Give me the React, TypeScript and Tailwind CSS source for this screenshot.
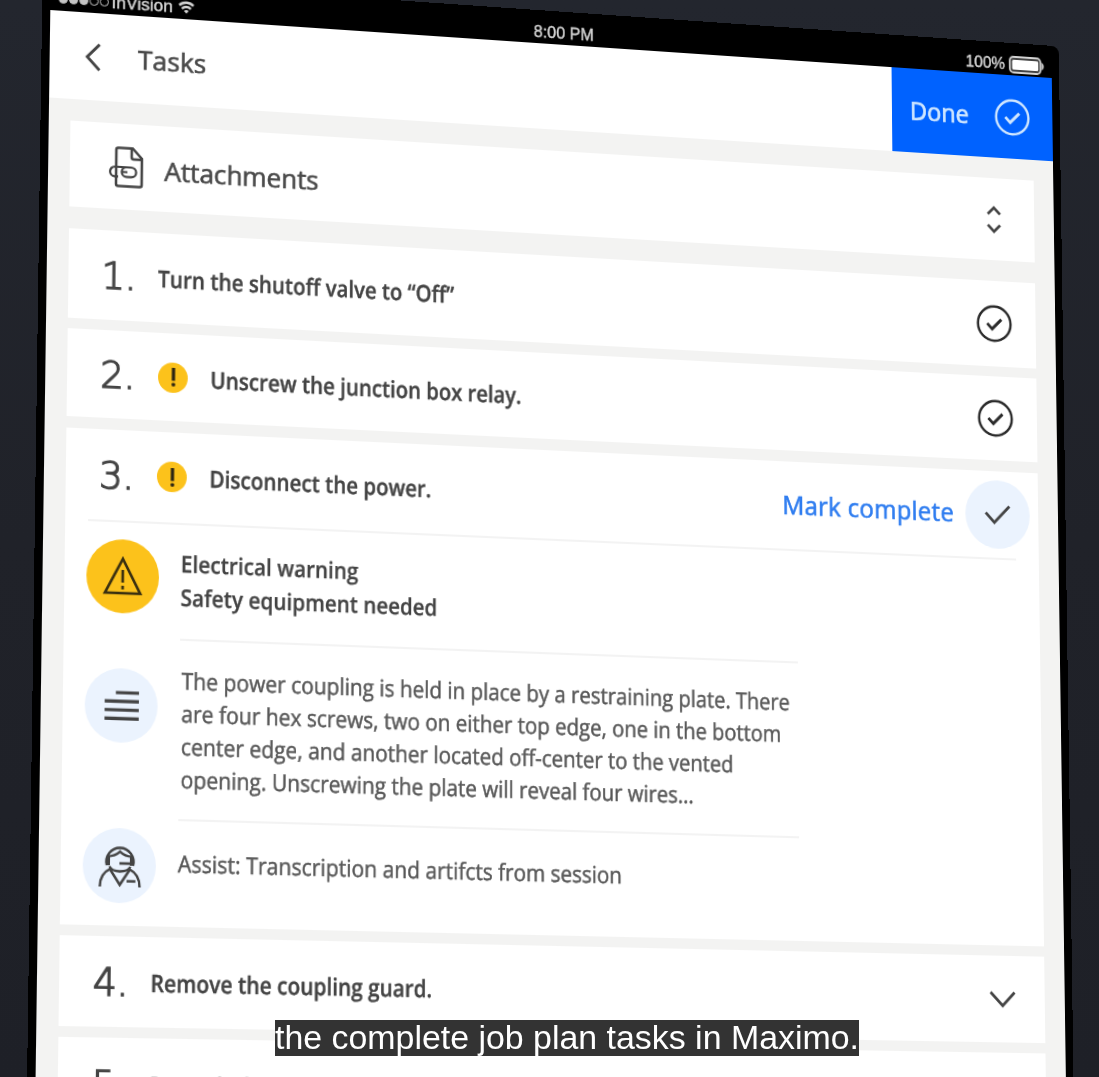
import type { ReactNode } from "react";

type Point = [number, number];

const BEZEL_X = 8;
const BEZEL_TOP = 33;
const SCREEN_W = 1024;
const SCREEN_H = 962;

// Where the corners of the 1024x962 screen area land in the window.
const QUAD: [Point, Point, Point, Point] = [
  [50.3, 10],
  [1051.7, 78],
  [1065.3, 1043.4],
  [36.3, 1025.6],
];

// CSS matrix that maps the screen rectangle onto QUAD (a square-to-quad homography).
function perspectiveMatrix() {
  const [[x0, y0], [x1, y1], [x2, y2], [x3, y3]] = QUAD;
  const dx1 = x1 - x2;
  const dx2 = x3 - x2;
  const sx = x0 - x1 + x2 - x3;
  const dy1 = y1 - y2;
  const dy2 = y3 - y2;
  const sy = y0 - y1 + y2 - y3;
  const det = dx1 * dy2 - dx2 * dy1;
  const g = (sx * dy2 - dx2 * sy) / det / SCREEN_W;
  const h = (dx1 * sy - sx * dy1) / det / SCREEN_H;
  const a = (x1 - x0) / SCREEN_W + g * x1;
  const b = (x3 - x0) / SCREEN_H + h * x3;
  const d = (y1 - y0) / SCREEN_W + g * y1;
  const e = (y3 - y0) / SCREEN_H + h * y3;
  const c = x0 - a * BEZEL_X - b * BEZEL_TOP;
  const f = y0 - d * BEZEL_X - e * BEZEL_TOP;
  const w = 1 - g * BEZEL_X - h * BEZEL_TOP;
  return `matrix3d(${[a, d, 0, g, b, e, 0, h, 0, 0, 1, 0, c, f, 0, w].join(",")})`;
}

function StatusBar() {
  return (
    <div className="grid h-[33px] grid-cols-3 items-center px-2 pt-2.5 font-['Liberation_Sans',sans-serif] text-[16.5px] leading-none text-[#d4d4d4] [-webkit-text-stroke:0.4px_#d4d4d4]">
      <div className="flex items-center">
        <div className="flex gap-[1.5px]">
          {[1, 1, 1, 0, 0].map((on, i) => (
            <span
              key={i}
              className={`size-[8.5px] rounded-full border-[1.5px] border-[#c4c4c4] ${on ? "bg-[#c4c4c4]" : ""}`}
            />
          ))}
        </div>
        <span className="ml-[3px] text-[17px]">InVision</span>
        <svg viewBox="0 0 16 13" className="ml-[5px] h-[13px] w-4" fill="none" stroke="currentColor" strokeWidth="2.4">
          <path d="M1 4.600a10 10 0 0 1 14 0M3.600 7.800a6.200 6.200 0 0 1 8.800 0" />
          <path d="M8 12.600 5.600 10a3.600 3.600 0 0 1 4.800 0z" fill="currentColor" stroke="none" />
        </svg>
      </div>
      <span className="text-center">8:00 PM</span>
      <div className="flex items-center justify-end gap-1">
        <span>100%</span>
        <svg viewBox="0 0 38 18" className="h-[18px] w-[38px]" fill="none">
          <rect x="1" y="1" width="33" height="16" rx="4" fill="#444" stroke="currentColor" strokeWidth="1.800" />
          <rect x="3.600" y="4" width="27.800" height="10" rx="1.500" fill="#fff" />
          <path d="M35.300 5c3 1.500 3 6.500 0 8z" fill="currentColor" />
        </svg>
      </div>
    </div>
  );
}

function CircleCheck({ className }: { className: string }) {
  return (
    <svg viewBox="0 0 38 38" className={`size-[38px] ${className}`} fill="none" stroke="currentColor">
      <circle cx="19" cy="19" r="17.300" strokeWidth="2.500" />
      <path d="m11.500 19 5.200 5.400L26.500 14.600" strokeWidth="2.900" />
    </svg>
  );
}

function Badge() {
  return (
    <span className="mr-[22px] ml-px flex size-[29px] items-center justify-center rounded-full bg-[#fcc21b]">
      <svg viewBox="0 0 6 20" className="h-5 w-1.5" fill="#2b2413">
        <rect x="1.400" y="1" width="3.200" height="12.400" />
        <rect x="1.300" y="15.600" width="3.400" height="3.200" rx="1" />
      </svg>
    </span>
  );
}

function TaskHeader({ n, title, warn, children }: { n: number; title: string; warn?: boolean; children?: ReactNode }) {
  return (
    <div className="flex h-full items-center">
      <span className="w-[55px] pt-0.5 font-['DejaVu_Sans_Light','DejaVu_Sans',sans-serif] text-[36px] leading-none font-extralight tracking-[-0.5px] text-[#444] [-webkit-text-stroke:1.3px_#444]">
        {n}.
      </span>
      {warn && <Badge />}
      <span className="flex-1 origin-left scale-x-90 pt-px text-[22.5px] font-semibold whitespace-nowrap text-[#444] [-webkit-text-stroke:0.4px_#444]">
        {title}
      </span>
      {children}
    </div>
  );
}

function Round({ className, children }: { className: string; children: ReactNode }) {
  return (
    <span className={`flex size-[70px] shrink-0 items-center justify-center rounded-full ${className}`}>
      {children}
    </span>
  );
}

export default function App() {
  return (
    <div className="relative h-[1077px] w-[1099px] overflow-hidden bg-linear-to-b from-[#23262e] via-[#202229] to-[#1e2027] font-['Open_Sans',sans-serif]">
      <div
        className="h-[1160px] w-[1040px] origin-top-left rounded-lg bg-black px-2"
        style={{ transform: perspectiveMatrix() }}
      >
        <StatusBar />
        <div className="h-[1100px] bg-[#f3f3f2]">
          <header className="flex h-[85px] items-stretch bg-white">
            <div className="flex flex-1 items-center pl-[34px]">
              <svg viewBox="0 0 16 28" className="h-7 w-4" fill="none" stroke="#444" strokeWidth="2.800">
                <path d="M14.500 1.500 2.500 14l12 12.500" />
              </svg>
              <h1 className="ml-9 text-[26px] text-[#4a4a4a] [-webkit-text-stroke:0.6px_#4a4a4a]">Tasks</h1>
            </div>
            <button className="flex w-[171px] items-center justify-between bg-[#0062ff] pr-6 pl-[19px] text-[25px] text-[#cfe6ff] [-webkit-text-stroke:0.7px_#cfe6ff]">
              Done
              <CircleCheck className="text-[#cfe6ff]" />
            </button>
          </header>

          <main className="flex flex-col pt-[21px] pr-[21px] pl-[21px] text-[#444]">
            <section className="mb-[21px] flex h-[83px] items-center bg-white pr-[35px] pl-[38px]">
              <svg viewBox="0 0 34 40" className="h-10 w-[34px]" fill="none" stroke="#444" strokeWidth="2.500">
                <path d="M9 1.500h14L32 11v25.500a2 2 0 0 1-2 2H9a2 2 0 0 1-2-2v-33a2 2 0 0 1 2-2z" />
                <path d="M22 2v8a2 2 0 0 0 2 2h8" />
                <path d="M19 20H5.800a4.700 4.700 0 0 0 0 9.400H9" strokeWidth="2.200" />
                <rect x="12.500" y="20" width="14" height="9.400" rx="4.700" strokeWidth="2.200" />
                <path d="M12 24.700h6" strokeWidth="2" />
              </svg>
              <h2 className="ml-5 flex-1 pt-[3px] text-[26px] tracking-[-0.2px] text-[#4a4a4a] [-webkit-text-stroke:0.6px_#4a4a4a]">
                Attachments
              </h2>
              <svg viewBox="0 0 16 28" className="h-7 w-4" fill="none" stroke="#444" strokeWidth="2.800">
                <path d="m1.500 8.500 6.500-6.500 6.500 6.500M1.500 19.500l6.500 6.500 6.500-6.500" />
              </svg>
            </section>

            <section className="mb-2.5 h-[86px] bg-white pr-[25px] pl-[32px]">
              <TaskHeader n={1} title="Turn the shutoff valve to “Off”">
                <CircleCheck className="text-[#2b2b2b]" />
              </TaskHeader>
            </section>

            <section className="mb-[11px] h-[84px] bg-white pr-[25px] pl-[32px]">
              <TaskHeader n={2} title="Unscrew the junction box relay." warn>
                <CircleCheck className="text-[#2b2b2b]" />
              </TaskHeader>
            </section>

            <section className="mb-2.5 h-[467px] bg-white">
              <div className="h-[86px] pr-[9px] pb-px pl-[32px]">
                <TaskHeader n={3} title="Disconnect the power." warn>
                  <button className="mr-3 text-[25px] tracking-[0.3px] text-[#2f7df0] [-webkit-text-stroke:0.6px_#2f7df0]">
                    Mark complete
                  </button>
                  <span className="flex size-[68px] items-center justify-center rounded-full bg-[#ebf3fe]">
                    <svg viewBox="0 0 28 20" className="h-5 w-7" fill="none" stroke="#444" strokeWidth="2.800">
                      <path d="m1.500 8.500 9 9.500L26.500 1.500" />
                    </svg>
                  </span>
                </TaskHeader>
              </div>
              <div className="mr-6 ml-[22px] h-0.5 bg-[#f3f3f3]" />

              <div className="grid grid-cols-[91px_617px] pl-[21px]">
                <Round className="mt-4 bg-[#fcc21b]">
                  <svg viewBox="0 0 40 40" className="size-10" fill="none" stroke="#3a3010" strokeWidth="2.600">
                    <path d="M20 3.500 3 36h34z" />
                    <path d="M20 14v12M20 29v3.500" />
                  </svg>
                </Round>
                <div className="flex h-[110px] items-center border-b-2 border-[#f3f3f3] pb-[3px]">
                  <p className="origin-left scale-x-[0.922] text-[22px] leading-[31.5px] font-semibold whitespace-nowrap [-webkit-text-stroke:0.3px_#444]">
                    Electrical warning
                    <br />
                    Safety equipment needed
                  </p>
                </div>

                <Round className="mt-7 bg-[#ebf3fe]">
                  <svg viewBox="0 0 34 30" className="h-[29px] w-[33px]" fill="#444">
                    <path d="M11 0.500H34v3.200H11zM0 8.900h34v3.200H0zM0 17.300h34v3.200H0zM0 25.700h34v3.200H0z" />
                  </svg>
                </Round>
                <div className="flex h-[170px] items-center border-b-2 border-[#f3f3f3]">
                  <p className="origin-left scale-x-[0.931] pl-0.5 text-[22px] leading-[31px] whitespace-nowrap text-[#585858] [-webkit-text-stroke:0.5px_#585858]">
                    The power coupling is held in place by a restraining plate. There
                    <br />
                    are four hex screws, two on either top edge, one in the bottom
                    <br />
                    center edge, and another located off-center to the vented
                    <br />
                    opening. Unscrewing the plate will reveal four wires...
                  </p>
                </div>

                <Round className="mt-2 bg-[#ebf3fe]">
                  <svg viewBox="0 0 41 42" className="h-[42px] w-[41px]" fill="none" stroke="#444" strokeWidth="2.400">
                    <path d="M8 21a13 13 0 1 1 25 0" />
                    <path d="M8.500 12.500c5 0 8.500-1 12-4.500 3.500 3.500 7 4.500 12 4.500" />
                    <path d="M9 13v8M32 13v8" strokeWidth="4" />
                    <path d="M10.500 22c3 6 17 6 20 0M31 19h-11" />
                    <path d="M1.500 41c0-8.500 3-13.500 9.500-16.500L20.500 39 30 24.500c6.500 3 9.500 8 9.500 16.500" />
                    <path d="M27 35.500h8.500" />
                  </svg>
                </Round>
                <div className="flex h-[84px] items-center pb-[5px]">
                  <p className="origin-left scale-x-[0.939] text-[22px] whitespace-nowrap text-[#585858] [-webkit-text-stroke:0.5px_#585858]">
                    Assist: Transcription and artifcts from session
                  </p>
                </div>
              </div>
            </section>

            <section className="mb-2.5 h-[84px] bg-white pr-[30px] pl-[32px]">
              <TaskHeader n={4} title="Remove the coupling guard.">
                <svg viewBox="0 0 28 17" className="h-[17px] w-7" fill="none" stroke="#444" strokeWidth="2.800">
                  <path d="m1.500 1.500 12.500 13 12.500-13" />
                </svg>
              </TaskHeader>
            </section>

            <section className="h-[86px] bg-white pr-[30px] pl-[32px]">
              <TaskHeader n={5} title="Detatch the base" />
            </section>
          </main>
        </div>
      </div>

      <p className="absolute top-[1020px] left-[275px] h-9 w-[584px] bg-[#333333] font-['Liberation_Sans',sans-serif] text-[33.9px] leading-[35px] whitespace-nowrap text-white">
        the complete job plan tasks in Maximo.
      </p>
    </div>
  );
}
